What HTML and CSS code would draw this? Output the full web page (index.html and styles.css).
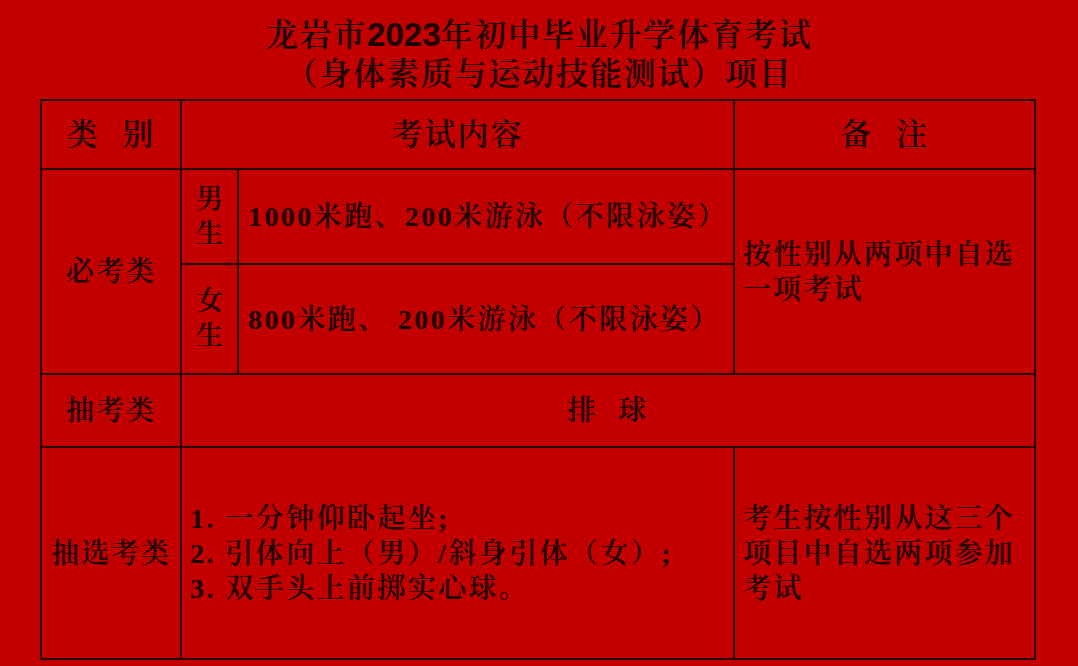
FILE: index.html
```html
<!DOCTYPE html>
<html lang="zh-CN">
<head>
<meta charset="utf-8">
<title>龙岩市2023年初中毕业升学体育考试项目</title>
<link rel="stylesheet" href="styles.css">
</head>
<body>
<div class="page">
  <h1 class="title">
    <span class="line">龙岩市<b class="num">2023</b>年初中毕业升学体育考试</span>
    <span class="line">（身体素质与运动技能测试）项目</span>
  </h1>
  <table class="grid">
    <colgroup>
      <col class="c-cat"><col class="c-sex"><col class="c-item"><col class="c-note">
    </colgroup>
    <tr class="r-head">
      <th>类 别</th>
      <th colspan="2">考试内容</th>
      <th>备 注</th>
    </tr>
    <tr class="r-boy">
      <td rowspan="2" class="cat">必考类</td>
      <td class="sex">男<br>生</td>
      <td class="item">1000米跑、200米游泳（不限泳姿）</td>
      <td rowspan="2" class="note">按性别从两项中自选一项考试</td>
    </tr>
    <tr class="r-girl">
      <td class="sex">女<br>生</td>
      <td class="item">800米跑、 200米游泳（不限泳姿）</td>
    </tr>
    <tr class="r-draw">
      <td class="cat">抽考类</td>
      <td colspan="3" class="wide">排 球</td>
    </tr>
    <tr class="r-pick">
      <td class="cat">抽选考类</td>
      <td colspan="2" class="list">1. 一分钟仰卧起坐;<br>2. 引体向上（男）/斜身引体（女）;<br>3. 双手头上前掷实心球。</td>
      <td class="note">考生按性别从这三个项目中自选两项参加考试</td>
    </tr>
  </table>
</div>
</body>
</html>
```

FILE: styles.css
```css
html, body {
  margin: 0;
  padding: 0;
}

body {
  background: #c20000;
  color: #1c0404;
  font-family: "Liberation Serif", "Noto Serif CJK SC", "Noto Sans CJK SC", serif;
}

.page {
  width: 1078px;
  height: 666px;
  overflow: hidden;
  display: flex;
  flex-direction: column;
}

.title {
  margin: 0;
  padding-top: 14px;
  display: flex;
  flex-direction: column;
  align-items: center;
  font-family: "Noto Serif CJK SC", "Noto Sans CJK SC", sans-serif;
  font-size: 32px;
  line-height: 36px;
  font-weight: 600;
  letter-spacing: 1.8px;
}

.title .num {
  font-family: "Liberation Sans", sans-serif;
  font-weight: bold;
  font-size: 33px;
  letter-spacing: 0;
}

.grid {
  margin: 10px 0 0 40px;
  width: 994px;
  table-layout: fixed;
  border-collapse: collapse;
  font-size: 28px;
  font-weight: 600;
  letter-spacing: 2.4px;
  line-height: 35px;
}

.c-cat { width: 140px; }
.c-sex { width: 57px; }
.c-item { width: 496px; }
.c-note { width: 301px; }

.grid th,
.grid td {
  border: 2px solid #240101;
  padding: 0;
  vertical-align: middle;
  font-weight: 600;
}

.r-head th {
  font-size: 31px;
  letter-spacing: 2px;
  word-spacing: 13px;
  text-align: center;
}

.r-head { height: 69px; }
.r-boy { height: 95px; }
.r-girl { height: 110px; }
.r-draw { height: 73px; }
.r-pick { height: 212px; }

.cat {
  text-align: center;
  letter-spacing: 2px;
}

.sex {
  text-align: center;
  font-size: 27px;
  letter-spacing: 0;
}

.item {
  padding-left: 9px !important;
  white-space: nowrap;
}

.note {
  padding: 0 8px 0 8px !important;
  letter-spacing: 2.2px;
}

.wide {
  text-align: center;
  word-spacing: 11px;
}

.list {
  padding-left: 8px !important;
}
```
